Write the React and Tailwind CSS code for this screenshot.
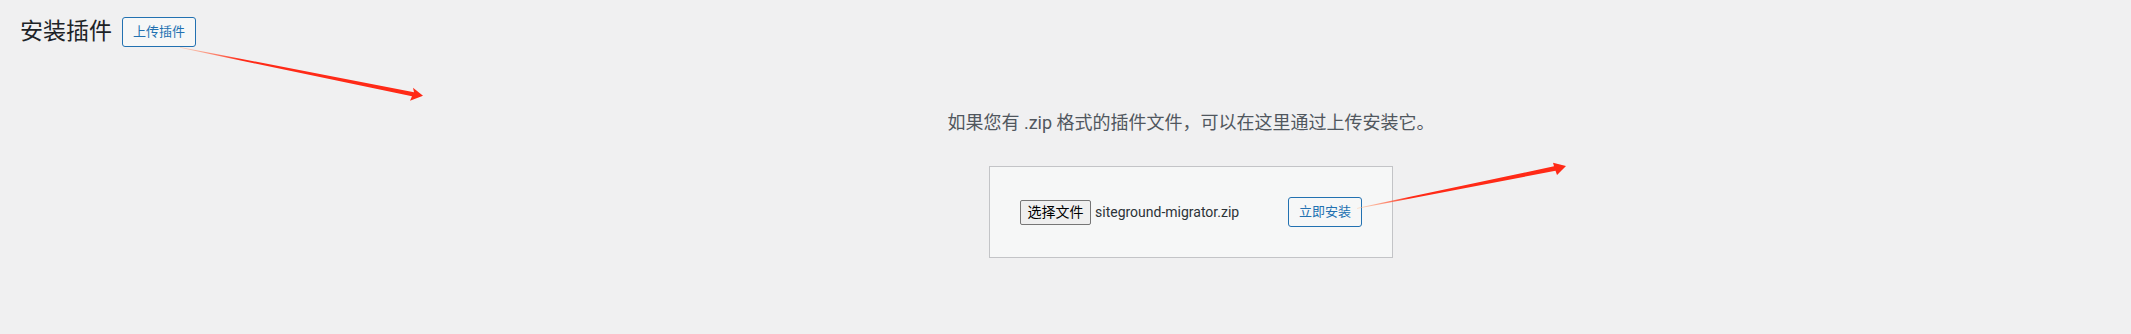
import React from "react";

const font = { fontFamily: 'Roboto, "Noto Sans CJK SC", sans-serif' };

function Arrows() {
  return (
    <svg className="absolute left-0 top-0 pointer-events-none" width="2131" height="334" viewBox="0 0 2131 334">
      <defs>
        <linearGradient id="g1" gradientUnits="userSpaceOnUse" x1="180" y1="47" x2="423" y2="96">
          <stop offset="0" stopColor="#ffb08a" stopOpacity="0.5" />
          <stop offset="0.25" stopColor="#ff2a17" />
          <stop offset="1" stopColor="#ff2a17" />
        </linearGradient>
        <linearGradient id="g2" gradientUnits="userSpaceOnUse" x1="1357" y1="208" x2="1566" y2="166">
          <stop offset="0" stopColor="#ffc090" stopOpacity="0.5" />
          <stop offset="0.25" stopColor="#ff2a17" />
          <stop offset="1" stopColor="#ff2a17" />
        </linearGradient>
      </defs>
      <polygon
        points="180,47 414,92.2 413,87.7 423,95.7 410,100.7 412,96.3 180,47.8"
        fill="url(#g1)"
      />
      <polygon
        points="1357,208 1554,166.3 1553,162.7 1566,166 1557,175 1555.5,170.8 1357,208.8"
        fill="url(#g2)"
      />
    </svg>
  );
}

export default function App() {
  return (
    <div className="relative w-full h-[334px] bg-[#f0f0f1] overflow-hidden" style={font}>
      <div className="flex items-center pl-[20px] pt-[17px]">
        <h1 className="text-[23px] leading-[30px] text-[#1d2327] font-normal">安装插件</h1>
        <button className="ml-[10px] h-[30px] w-[74px] rounded-[3px] border border-[#2271b1] bg-[#f6f7f7] text-[13px] text-[#2271b1] leading-[28px]">
          上传插件
        </button>
      </div>
      <div className="flex flex-col items-center pl-[251px]">
        <p className="mt-[62px] text-[18px] leading-[27px] text-[#50575e]">
          如果您有 .zip 格式的插件文件，可以在这里通过上传安装它。
        </p>
        <div className="mt-[30px] flex items-center justify-between w-[404px] h-[92px] border border-[#c3c4c7] bg-[#f6f7f7] px-[30px]">
          <div className="flex items-center">
            <span className="flex items-center justify-center w-[71px] h-[25px] rounded-[2px] border border-[#767676] bg-[#efefef] text-[14px] text-black leading-none">
              选择文件
            </span>
            <span className="ml-[4px] text-[14px] text-[#2c3338]">siteground-migrator.zip</span>
          </div>
          <button className="h-[30px] w-[74px] rounded-[3px] border border-[#2271b1] bg-[#f6f7f7] text-[13px] text-[#2271b1] leading-[28px]">
            立即安装
          </button>
        </div>
      </div>
      <Arrows />
    </div>
  );
}
